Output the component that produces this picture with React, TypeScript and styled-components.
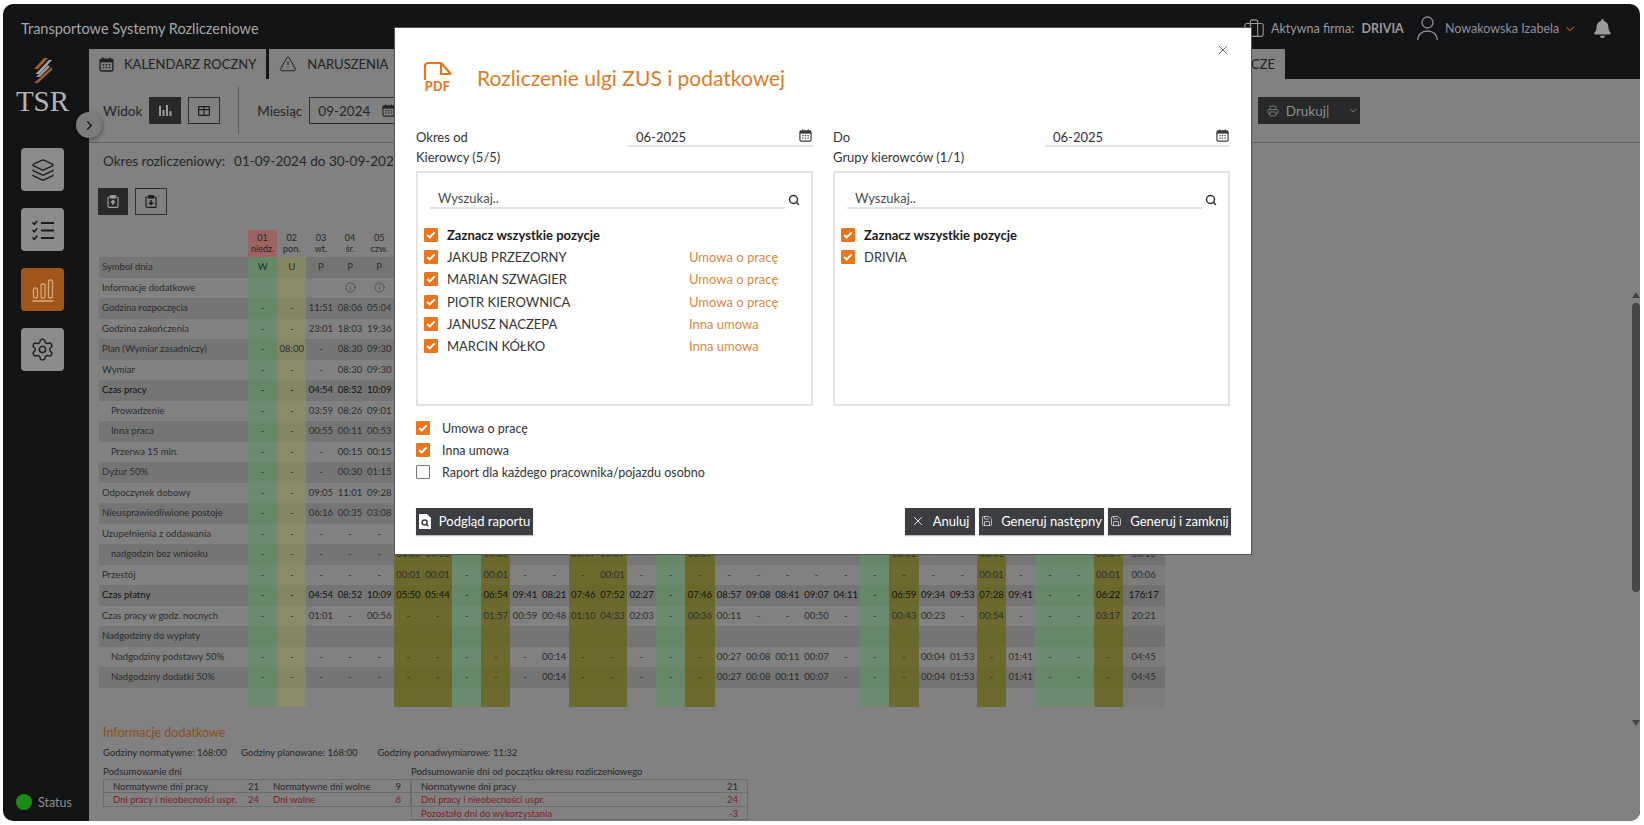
import styled, { createGlobalStyle } from 'styled-components';
import {
  Briefcase,
  ChevronDown,
  ChevronRight,
  ChartLine,
  Info,
  Layers,
  Printer,
  Save,
  Search,
  Settings,
  TriangleAlert,
  X,
} from 'lucide-react';
import { FaBell } from 'react-icons/fa';

const GlobalStyle = createGlobalStyle`
  html, body {
    margin: 0;
    padding: 0;
    background: #fff;
  }
  body {
    font-family: Lato, "Liberation Sans", sans-serif;
    overflow: hidden;
  }
  * {
    box-sizing: border-box;
  }
`;

type DayKind = 'g' | 'u' | 'n' | 'y';

const dayKinds = 'g u n n n y y g y n n y y n g y n n n n n g y n n y n g g y'.split(' ') as DayKind[];

const dayHeaders = [
  ['01', 'niedz.'],
  ['02', 'pon.'],
  ['03', 'wt.'],
  ['04', 'śr.'],
  ['05', 'czw.'],
];

const cellColors: Record<DayKind, string> = {
  g: 'rgba(92, 150, 96, 0.55)',
  u: 'rgba(150, 148, 84, 0.55)',
  n: 'transparent',
  y: 'rgba(105, 100, 24, 0.78)',
};

interface TableRow {
  label: string;
  values: string;
  indent?: boolean;
  strong?: boolean;
}

const tableRows: TableRow[] = [
  { label: 'Symbol dnia', values: 'W U P P P' },
  { label: 'Informacje dodatkowe', values: '_ _ _ i i' },
  { label: 'Godzina rozpoczęcia', values: '- - 11:51 08:06 05:04' },
  { label: 'Godzina zakończenia', values: '- - 23:01 18:03 19:36' },
  { label: 'Plan (Wymiar zasadniczy)', values: '- 08:00 - 08:30 09:30' },
  { label: 'Wymiar', values: '- - - 08:30 09:30' },
  { label: 'Czas pracy', values: '- - 04:54 08:52 10:09', strong: true },
  { label: 'Prowadzenie', values: '- - 03:59 08:26 09:01', indent: true },
  { label: 'Inna praca', values: '- - 00:55 00:11 00:53', indent: true },
  { label: 'Przerwa 15 min.', values: '- - - 00:15 00:15', indent: true },
  { label: 'Dyżur 50%', values: '- - - 00:30 01:15' },
  { label: 'Odpoczynek dobowy', values: '- - 09:05 11:01 09:28' },
  { label: 'Nieusprawiedliwione postoje', values: '- - 06:16 00:35 03:08' },
  { label: 'Uzupełnienia z oddawania', values: '- - - - -' },
  {
    label: 'nadgodzin bez wniosku',
    values: '- - - - - 00:03 00:03 - 00:03 - - 00:07 00:07 - - 00:07 - - - - - - 00:01 - - 00:01 - - - 00:04 00:10',
    indent: true,
  },
  {
    label: 'Przestój',
    values: '- - - - - 00:01 00:01 - 00:01 - - - 00:01 - - - - - - - - - - - - 00:01 - - - 00:01 00:06',
  },
  {
    label: 'Czas płatny',
    values:
      '- - 04:54 08:52 10:09 05:50 05:44 - 06:54 09:41 08:21 07:46 07:52 02:27 - 07:46 08:57 09:08 08:41 09:07 04:11 - 06:59 09:34 09:53 07:28 09:41 - - 06:22 176:17',
    strong: true,
  },
  {
    label: 'Czas pracy w godz. nocnych',
    values:
      '- - 01:01 - 00:56 - - - 01:57 00:59 00:48 01:10 04:33 02:03 - 00:36 00:11 - - 00:50 - - 00:43 00:23 - 00:54 - - - 03:17 20:21',
  },
  { label: 'Nadgodziny do wypłaty', values: '' },
  {
    label: 'Nadgodziny podstawy 50%',
    values: '- - - - - - - - - - 00:14 - - - - - 00:27 00:08 00:11 00:07 - - - 00:04 01:53 - 01:41 - - - 04:45',
    indent: true,
  },
  {
    label: 'Nadgodziny dodatki 50%',
    values: '- - - - - - - - - - 00:14 - - - - - 00:27 00:08 00:11 00:07 - - - 00:04 01:53 - 01:41 - - - 04:45',
    indent: true,
  },
];

const drivers = [
  ['JAKUB PRZEZORNY', 'Umowa o pracę'],
  ['MARIAN SZWAGIER', 'Umowa o pracę'],
  ['PIOTR KIEROWNICA', 'Umowa o pracę'],
  ['JANUSZ NACZEPA', 'Inna umowa'],
  ['MARCIN KÓŁKO', 'Inna umowa'],
];

const Window = styled.div`
  position: relative;
  width: 1637px;
  height: 817px;
  margin: 4px 0 0 3px;
  border-radius: 10px;
  overflow: hidden;
  background: #131416;
  display: flex;
  flex-direction: column;
`;

const Header = styled.header`
  height: 45px;
  flex: none;
  display: flex;
  align-items: center;
  padding: 4px 0 0 18px;
  color: #a6a7a7;
`;

const AppTitle = styled.div`
  font-size: 14.5px;
  flex: 1;
`;

const Company = styled.div`
  display: flex;
  align-items: center;
  gap: 6px;
  font-size: 12.5px;
  width: 174px;
  color: #9a9b9b;
  & b {
    margin-left: 4px;
  }
`;

const UserBox = styled.div`
  display: flex;
  align-items: center;
  font-size: 12.5px;
  width: 176px;
  color: #8f8f96;
  & > svg:first-child {
    margin-right: 7px;
  }
  & > svg:last-child {
    margin-left: 4px;
    color: #8a4c18;
  }
`;

const BellBox = styled.div`
  width: 47px;
  display: flex;
  color: #9a9b9b;
  font-size: 19px;
`;

const Body = styled.div`
  flex: 1;
  display: flex;
  min-height: 0;
`;

const Sidebar = styled.aside`
  width: 86px;
  flex: none;
  display: flex;
  flex-direction: column;
  align-items: center;
  padding-top: 9px;
  padding-right: 7px;
`;

const LogoText = styled.div`
  font-family: "Liberation Serif", serif;
  font-size: 29px;
  line-height: 26px;
  color: #b4b4b4;
  margin: 5px 0 34px;
`;

const NavButton = styled.div<{ $active?: boolean }>`
  width: 43px;
  height: 43px;
  margin-bottom: 17px;
  border-radius: 4px;
  display: flex;
  align-items: center;
  justify-content: center;
  background: ${(p) => (p.$active ? '#a3561a' : '#8a8b8a')};
  color: ${(p) => (p.$active ? '#d8a77c' : '#1c1d1e')};
`;

const Status = styled.div`
  margin-top: auto;
  align-self: flex-start;
  display: flex;
  align-items: center;
  gap: 6px;
  padding: 0 0 11px 13px;
  font-size: 12.5px;
  color: #8f9090;
`;

const StatusDot = styled.span`
  width: 16px;
  height: 16px;
  border-radius: 50%;
  background: #1d8a18;
`;

const Main = styled.main`
  flex: 1;
  min-width: 0;
  display: flex;
  flex-direction: column;
`;

const Tabs = styled.nav`
  height: 30px;
  flex: none;
  display: flex;
  gap: 3px;
  padding-right: 355px;
`;

const Tab = styled.div<{ $grow?: boolean; $width?: number }>`
  display: flex;
  align-items: center;
  justify-content: ${(p) => (p.$grow ? 'flex-end' : 'flex-start')};
  gap: 10px;
  padding: 0 10px;
  flex: ${(p) => (p.$grow ? 1 : 'none')};
  background: #808180;
  font-size: 13px;
  color: #1f2021;
  white-space: nowrap;
  & > svg {
    flex: none;
  }
`;

const Content = styled.div`
  position: relative;
  flex: 1;
  min-height: 0;
  background: #808180;
  color: #262728;
`;

const Toolbar = styled.div`
  height: 64px;
  display: flex;
  align-items: center;
  padding: 0 280px 0 14px;
  border-bottom: 1px solid #5f605f;
  font-size: 13.5px;
`;

const ToolLabel = styled.span`
  margin-right: 7px;
`;

const SquareButton = styled.div<{ $dark?: boolean; $size?: number }>`
  width: ${(p) => p.$size ?? 32}px;
  height: 27px;
  margin-right: 7px;
  display: flex;
  align-items: center;
  justify-content: center;
  background: ${(p) => (p.$dark ? '#27292b' : 'transparent')};
  border: 1px solid ${(p) => (p.$dark ? '#27292b' : '#2f3031')};
  color: ${(p) => (p.$dark ? '#9a9b9b' : '#1d1e1f')};
`;

const ToolDivider = styled.span`
  width: 1px;
  height: 47px;
  background: #5a5b5a;
  margin: 0 18px 0 11px;
`;

const MonthInput = styled.div`
  width: 94px;
  height: 27px;
  border: 1px solid #2f3031;
  display: flex;
  align-items: center;
  justify-content: space-between;
  padding: 0 7px 0 8px;
`;

const PrintButton = styled.div`
  margin-left: auto;
  width: 102px;
  height: 27px;
  background: #27292b;
  color: #8f9090;
  display: flex;
  align-items: center;
  gap: 7px;
  padding: 0 0 0 9px;
  & > svg:last-child {
    margin-left: 11px;
  }
`;

const PeriodLine = styled.div`
  height: 36px;
  display: flex;
  align-items: center;
  padding-left: 14px;
  font-size: 13.5px;
  white-space: nowrap;
  & span + span {
    margin-left: 9px;
  }
`;

const ActionRow = styled.div`
  display: flex;
  padding: 9px 0 0 9px;
  margin-bottom: 15px;
`;

const Table = styled.div`
  margin-left: 10px;
  width: 1066px;
  font-size: 9.5px;
`;

const gridColumns = '149px repeat(30, 29.17px) 42px';

const HeadRow = styled.div`
  display: grid;
  grid-template-columns: ${gridColumns};
  height: 27px;
`;

const HeadCell = styled.div<{ $holiday?: boolean }>`
  text-align: center;
  line-height: 10.5px;
  padding-top: 3px;
  font-size: 9px;
  background: ${(p) => (p.$holiday ? '#9e6464' : 'transparent')};
`;

const Row = styled.div<{ $odd?: boolean; $strong?: boolean }>`
  display: grid;
  grid-template-columns: ${gridColumns};
  height: 20.5px;
  line-height: 20.5px;
  background: ${(p) => (p.$odd ? '#747574' : 'transparent')};
  color: ${(p) => (p.$strong ? '#111' : '#2c2d2e')};
`;

const RowLabel = styled.div<{ $indent?: boolean }>`
  padding-left: ${(p) => (p.$indent ? 12 : 3)}px;
  white-space: nowrap;
`;

const Cell = styled.div<{ $kind: DayKind }>`
  text-align: center;
  background: ${(p) => cellColors[p.$kind]};
  display: flex;
  align-items: center;
  justify-content: center;
`;

const TotalCell = styled.div`
  text-align: center;
  background: rgba(0, 0, 0, 0.03);
`;

const TailRow = styled(Row)`
  height: 19px;
`;

const InfoSection = styled.section`
  padding: 18px 0 0 14px;
  font-size: 9.5px;
`;

const InfoTitle = styled.h3`
  margin: 0 0 7px;
  font-size: 12.5px;
  font-weight: 400;
  color: #8a4f1c;
`;

const InfoHours = styled.div`
  display: flex;
  gap: 14px;
  margin-bottom: 7px;
  height: 12px;
  line-height: 12px;
  & span + span + span {
    margin-left: 6px;
  }
`;

const SummaryGrid = styled.div`
  display: grid;
  grid-template-columns: 308px 337px;
`;

const SummaryTitle = styled.div`
  height: 13px;
  line-height: 12px;
`;

const SummaryTable = styled.div`
  border: 1px solid #6a6b6a;
  border-bottom: 0;
`;

const SummaryRow = styled.div<{ $cols: string; $red?: boolean }>`
  display: grid;
  grid-template-columns: ${(p) => p.$cols};
  height: 13.5px;
  line-height: 13px;
  padding: 0 9px;
  border-bottom: 1px solid #6a6b6a;
  color: ${(p) => (p.$red ? '#7c1f2a' : '#292a2b')};
  & > span:nth-child(even) {
    text-align: right;
  }
`;

const ScrollTrack = styled.div`
  position: absolute;
  right: 0;
  top: 213px;
  width: 8px;
  height: 434px;
  display: flex;
  flex-direction: column;
  align-items: center;
  justify-content: space-between;
  color: #454647;
`;

const ScrollThumb = styled.div`
  width: 8px;
  height: 289px;
  margin-top: 5px;
  margin-bottom: auto;
  background: #454647;
  border-radius: 4px;
`;

const Arrow = styled.span<{ $down?: boolean }>`
  width: 0;
  height: 0;
  border-left: 4px solid transparent;
  border-right: 4px solid transparent;
  ${(p) => (p.$down ? 'border-top: 6px solid #454647;' : 'border-bottom: 6px solid #454647;')}
`;

const Collapse = styled.div`
  position: absolute;
  left: 73px;
  top: 108px;
  width: 26px;
  height: 26px;
  border-radius: 50%;
  background: #7b7c7b;
  box-shadow: 1px 2px 4px rgba(0, 0, 0, 0.3);
  display: flex;
  align-items: center;
  justify-content: center;
  color: #141516;
`;

const Modal = styled.div`
  position: absolute;
  left: 392px;
  top: 24px;
  width: 856px;
  height: 526px;
  background: #fff;
  box-shadow: 0 0 0 1px #555;
  padding: 34px 20px 0 21px;
  color: #333436;
  font-size: 13px;
`;

const CloseButton = styled.div`
  position: absolute;
  right: 20px;
  top: 14px;
  display: flex;
  color: #666;
`;

const ModalHead = styled.div`
  display: flex;
  align-items: center;
  height: 31px;
  padding-left: 7px;
  gap: 25px;
  margin-bottom: 35px;
`;

const PdfMark = styled.div`
  position: relative;
  width: 29px;
  height: 31px;
  color: #e9761f;
  & svg {
    display: block;
  }
`;

const PdfLabel = styled.span`
  position: absolute;
  left: 0;
  bottom: 0;
  width: 100%;
  text-align: center;
  font-size: 12.5px;
  line-height: 12px;
  font-weight: 900;
  letter-spacing: 0.4px;
`;

const ModalTitle = styled.h2`
  margin: 0;
  font-size: 21px;
  font-weight: 400;
  color: #dd7d2a;
  white-space: nowrap;
`;

const Columns = styled.div`
  display: grid;
  grid-template-columns: 397px 397px;
  gap: 20px;
`;

const PeriodRow = styled.div`
  display: flex;
  justify-content: space-between;
  height: 19px;
  line-height: 18px;
`;

const DateField = styled.div`
  width: 185px;
  border-bottom: 2px solid #e3e3e3;
  display: flex;
  justify-content: space-between;
  padding: 0 1px 0 8px;
  & > svg {
    margin-top: 1px;
    color: #3a3b3d;
  }
`;

const ListLabel = styled.div`
  height: 24px;
  line-height: 21px;
`;

const ListBox = styled.div`
  height: 235px;
  border: 2px solid #e4e4e4;
  padding: 17px 0 0 6px;
`;

const SearchRow = styled.div`
  display: flex;
  align-items: center;
  margin: 0 0 15px 6px;
  height: 19px;
  & > svg {
    margin-left: 3px;
    color: #333;
  }
`;

const SearchInput = styled.div`
  width: 355px;
  height: 19px;
  line-height: 17px;
  padding-left: 8px;
  color: #4a4b4d;
  border-bottom: 2px solid #e3e3e3;
`;

const ListRow = styled.div<{ $bold?: boolean }>`
  display: grid;
  grid-template-columns: 23px 242px 1fr;
  align-items: center;
  height: 22.2px;
  font-weight: ${(p) => (p.$bold ? 700 : 400)};
  color: ${(p) => (p.$bold ? '#1a1a1a' : '#333436')};
`;

const Contract = styled.span`
  color: #d98a3e;
`;

const CheckMark = styled.span<{ $checked?: boolean }>`
  width: 14px;
  height: 14px;
  display: flex;
  align-items: center;
  justify-content: center;
  background: ${(p) => (p.$checked ? '#e9761f' : '#fff')};
  border: 1px solid ${(p) => (p.$checked ? '#e9761f' : '#777')};
  border-radius: 1px;
`;

const Options = styled.div`
  margin-top: 11px;
  font-size: 12.5px;
`;

const OptionRow = styled.div`
  display: flex;
  align-items: center;
  gap: 12px;
  height: 22.2px;
`;

const Footer = styled.div`
  display: flex;
  align-items: center;
  margin-top: 24px;
  gap: 4px;
`;

const FooterButton = styled.div<{ $first?: boolean; $width: number }>`
  width: ${(p) => p.$width}px;
  height: 27px;
  background: #3c3e42;
  color: #fff;
  display: flex;
  align-items: center;
  justify-content: center;
  gap: 8px;
  font-size: 13px;
  white-space: nowrap;
  margin-right: ${(p) => (p.$first ? 'auto' : 0)};
  box-shadow: 0 1px 1px rgba(0, 0, 0, 0.25);
`;

function CalendarIcon({ size = 14 }: { size?: number }) {
  return (
    <svg width={size} height={size} viewBox="0 0 14 14" fill="none">
      <rect x="1" y="2" width="12" height="11" rx="1.5" stroke="currentColor" strokeWidth="1.3" />
      <rect x="1" y="2" width="12" height="3" fill="currentColor" />
      <path d="M4 0.5v2M10 0.5v2" stroke="currentColor" strokeWidth="1.3" />
      <path
        d="M3.5 7.2h1.4M6.3 7.2h1.4M9.1 7.2h1.4M3.5 9.8h1.4M6.3 9.8h1.4M9.1 9.8h1.4"
        stroke="currentColor"
        strokeWidth="1.3"
      />
    </svg>
  );
}

function LogoMark() {
  return (
    <svg width="20" height="25" viewBox="0 0 20 25">
      <path d="M11 0h4L5 11H1z" fill="#a3602a" />
      <path d="M16 2h3L6 16H2.5z" fill="#a7a7a7" />
      <path d="M19 9v3L5 25H1z" fill="#a3602a" />
      <path d="M15 7l2 2L7 19H3z" fill="#c9c9c9" opacity="0.7" />
    </svg>
  );
}

function ChecklistIcon() {
  return (
    <svg width="24" height="24" viewBox="0 0 24 24" fill="none" stroke="currentColor" strokeWidth="1.6">
      <path d="M1.5 4.5l1.8 1.8 3-3.5M1.5 12l1.8 1.8 3-3.5M1.5 19.5l1.8 1.8 3-3.5" />
      <path d="M10 5h13M10 12.5h13M10 20h13" strokeWidth="1.8" />
    </svg>
  );
}

function BarsIcon() {
  return (
    <svg width="22" height="24" viewBox="0 0 22 24" fill="none" stroke="currentColor" strokeWidth="1.3">
      <rect x="1.5" y="10" width="4" height="10" rx="1.6" />
      <rect x="9" y="6" width="4" height="14" rx="1.6" />
      <rect x="16.5" y="2" width="4" height="18" rx="1.6" />
      <path d="M0.5 23h21" strokeWidth="1.6" />
    </svg>
  );
}

function SmallBars() {
  return (
    <svg width="13" height="11" viewBox="0 0 13 11" fill="currentColor">
      <rect x="0" y="1" width="2" height="10" />
      <rect x="3.5" y="5" width="2" height="6" />
      <rect x="7" y="0" width="2" height="11" />
      <rect x="10.5" y="6" width="2" height="5" />
    </svg>
  );
}

function GridIcon() {
  return (
    <svg width="12" height="10" viewBox="0 0 12 10" fill="none" stroke="currentColor" strokeWidth="1.2">
      <rect x="0.6" y="0.6" width="10.8" height="8.8" />
      <path d="M0.6 3.6h10.8M6 0.6v8.8" />
    </svg>
  );
}

function ClipboardIcon({ up }: { up?: boolean }) {
  return (
    <svg width="12" height="13" viewBox="0 0 12 13" fill="none" stroke="currentColor" strokeWidth="1.2">
      <rect x="1" y="2" width="10" height="10.4" rx="1" />
      <rect x="3.8" y="0.6" width="4.4" height="2.4" fill="currentColor" />
      <path d={up ? 'M6 10V5.5M4 7.5l2-2 2 2' : 'M6 5v4.5M4 7.5l2 2 2-2'} strokeWidth="1.5" />
    </svg>
  );
}

function PersonIcon() {
  return (
    <svg width="21" height="25" viewBox="0 0 21 25" fill="none" stroke="currentColor" strokeWidth="1.3">
      <circle cx="10.5" cy="6.5" r="5.5" />
      <path d="M0.8 24c0-5.5 4-9 9.7-9s9.7 3.500 9.700 9" />
    </svg>
  );
}

function PreviewIcon() {
  return (
    <svg width="12" height="15" viewBox="0 0 12 15">
      <path d="M0 0h8l4 4v11H0z" fill="#fff" />
      <circle cx="5.600" cy="8.500" r="2.500" fill="none" stroke="#3c3e42" strokeWidth="1.4" />
      <path d="M7.400 10.300l2 2" stroke="#3c3e42" strokeWidth="1.400" />
    </svg>
  );
}

function TickBox({ checked = true }: { checked?: boolean }) {
  return (
    <CheckMark $checked={checked}>
      {checked && (
        <svg width="10" height="8" viewBox="0 0 10 8" fill="none" stroke="#fff" strokeWidth="2">
          <path d="M1.200 4l2.500 2.400 5-5" />
        </svg>
      )}
    </CheckMark>
  );
}

function DataRow({ row, odd }: { row: TableRow; odd: boolean }) {
  const parts = row.values ? row.values.split(' ') : [];
  return (
    <Row $odd={odd} $strong={row.strong}>
      <RowLabel $indent={row.indent}>{row.label}</RowLabel>
      {dayKinds.map((kind, i) => {
        const value = parts[i];
        return (
          <Cell key={i} $kind={kind}>
            {value === 'i' ? <Info size={11} strokeWidth={1.2} /> : value === '_' ? '' : value}
          </Cell>
        );
      })}
      <TotalCell>{parts[30]}</TotalCell>
    </Row>
  );
}

function SelectList({ items }: { items: string[][] }) {
  return (
    <ListBox>
      <SearchRow>
        <SearchInput>Wyszukaj..</SearchInput>
        <Search size={12} strokeWidth={3} />
      </SearchRow>
      <ListRow $bold>
        <TickBox />
        <span>Zaznacz wszystkie pozycje</span>
      </ListRow>
      {items.map(([name, contract]) => (
        <ListRow key={name}>
          <TickBox />
          <span>{name}</span>
          {contract && <Contract>{contract}</Contract>}
        </ListRow>
      ))}
    </ListBox>
  );
}

export default function App() {
  return (
    <>
      <GlobalStyle />
      <Window>
        <Header>
          <AppTitle>Transportowe Systemy Rozliczeniowe</AppTitle>
          <Company>
            <Briefcase size={22} strokeWidth={1.2} />
            <span>
              Aktywna firma: <b>DRIVIA</b>
            </span>
          </Company>
          <UserBox>
            <PersonIcon />
            <span>Nowakowska Izabela</span>
            <ChevronDown size={14} />
          </UserBox>
          <BellBox>
            <FaBell />
          </BellBox>
        </Header>
        <Body>
          <Sidebar>
            <LogoMark />
            <LogoText>TSR</LogoText>
            <NavButton>
              <Layers size={24} strokeWidth={1.3} />
            </NavButton>
            <NavButton>
              <ChecklistIcon />
            </NavButton>
            <NavButton $active>
              <BarsIcon />
            </NavButton>
            <NavButton>
              <Settings size={25} strokeWidth={1.3} />
            </NavButton>
            <Status>
              <StatusDot />
              Status
            </Status>
          </Sidebar>
          <Main>
            <Tabs>
              <Tab>
                <CalendarIcon size={15} />
                KALENDARZ ROCZNY
              </Tab>
              <Tab>
                <TriangleAlert size={18} strokeWidth={1.3} />
                NARUSZENIA
              </Tab>
              <Tab>
                <ChartLine size={16} strokeWidth={1.3} />
                ROZLICZENIA
              </Tab>
              <Tab $grow>RAPORTY KIEROWCZE</Tab>
            </Tabs>
            <Content>
              <Toolbar>
                <ToolLabel>Widok</ToolLabel>
                <SquareButton $dark>
                  <SmallBars />
                </SquareButton>
                <SquareButton>
                  <GridIcon />
                </SquareButton>
                <ToolDivider />
                <ToolLabel>Miesiąc</ToolLabel>
                <MonthInput>
                  09-2024
                  <CalendarIcon size={13} />
                </MonthInput>
                <PrintButton>
                  <Printer size={14} strokeWidth={1.5} />
                  Drukuj|
                  <ChevronDown size={15} strokeWidth={1.5} />
                </PrintButton>
              </Toolbar>
              <PeriodLine>
                <span>Okres rozliczeniowy:</span>
                <span>01-09-2024 do 30-09-2024</span>
                <span>Typ zatrudnienia:</span>
              </PeriodLine>
              <ActionRow>
                <SquareButton $dark $size={30}>
                  <ClipboardIcon up />
                </SquareButton>
                <SquareButton $size={32}>
                  <ClipboardIcon />
                </SquareButton>
              </ActionRow>
              <Table>
                <HeadRow>
                  <span />
                  {dayHeaders.map(([day, name], i) => (
                    <HeadCell key={day} $holiday={i === 0}>
                      {day}
                      <br />
                      {name}
                    </HeadCell>
                  ))}
                </HeadRow>
                {tableRows.map((row, i) => (
                  <DataRow key={row.label} row={row} odd={i % 2 === 0} />
                ))}
                <TailRow>
                  <span />
                  {dayKinds.map((kind, i) => (
                    <Cell key={i} $kind={kind} />
                  ))}
                  <TotalCell />
                </TailRow>
              </Table>
              <InfoSection>
                <InfoTitle>Informacje dodatkowe</InfoTitle>
                <InfoHours>
                  <span>Godziny normatywne: 168:00</span>
                  <span>Godziny planowane: 168:00</span>
                  <span>Godziny ponadwymiarowe: 11:32</span>
                </InfoHours>
                <SummaryGrid>
                  <div>
                    <SummaryTitle>Podsumowanie dni</SummaryTitle>
                    <SummaryTable>
                      <SummaryRow $cols="130px 16px 131px 1fr">
                        <span>Normatywne dni pracy</span>
                        <span>21</span>
                        <span style={{ paddingLeft: 14 }}>Normatywne dni wolne</span>
                        <span>9</span>
                      </SummaryRow>
                      <SummaryRow $cols="130px 16px 131px 1fr" $red>
                        <span>Dni pracy i nieobecności uspr.</span>
                        <span>24</span>
                        <span style={{ paddingLeft: 14 }}>Dni wolne</span>
                        <span>6</span>
                      </SummaryRow>
                    </SummaryTable>
                  </div>
                  <div>
                    <SummaryTitle>Podsumowanie dni od początku okresu rozliczeniowego</SummaryTitle>
                    <SummaryTable>
                      <SummaryRow $cols="1fr 30px">
                        <span>Normatywne dni pracy</span>
                        <span>21</span>
                      </SummaryRow>
                      <SummaryRow $cols="1fr 30px" $red>
                        <span>Dni pracy i nieobecności uspr.</span>
                        <span>24</span>
                      </SummaryRow>
                      <SummaryRow $cols="1fr 30px" $red>
                        <span>Pozostało dni do wykorzystania</span>
                        <span>-3</span>
                      </SummaryRow>
                    </SummaryTable>
                  </div>
                </SummaryGrid>
              </InfoSection>
              <ScrollTrack>
                <Arrow />
                <ScrollThumb />
                <Arrow $down />
              </ScrollTrack>
            </Content>
          </Main>
        </Body>
        <Collapse>
          <ChevronRight size={15} />
        </Collapse>
        <Modal>
          <CloseButton>
            <X size={16} strokeWidth={1.4} />
          </CloseButton>
          <ModalHead>
            <PdfMark>
              <svg width="29" height="19" viewBox="0 0 29 19" fill="none" stroke="currentColor" strokeWidth="2.200">
                <path d="M2 18V4a3 3 0 0 1 3-3h13l9 10v1H18V2" />
              </svg>
              <PdfLabel>PDF</PdfLabel>
            </PdfMark>
            <ModalTitle>Rozliczenie ulgi ZUS i podatkowej</ModalTitle>
          </ModalHead>
          <Columns>
            <div>
              <PeriodRow>
                <span>Okres od</span>
                <DateField>
                  06-2025
                  <CalendarIcon size={13} />
                </DateField>
              </PeriodRow>
              <ListLabel>Kierowcy (5/5)</ListLabel>
              <SelectList items={drivers} />
            </div>
            <div>
              <PeriodRow>
                <span>Do</span>
                <DateField>
                  06-2025
                  <CalendarIcon size={13} />
                </DateField>
              </PeriodRow>
              <ListLabel>Grupy kierowców (1/1)</ListLabel>
              <SelectList items={[['DRIVIA', '']]} />
            </div>
          </Columns>
          <Options>
            <OptionRow>
              <TickBox />
              Umowa o pracę
            </OptionRow>
            <OptionRow>
              <TickBox />
              Inna umowa
            </OptionRow>
            <OptionRow>
              <TickBox checked={false} />
              Raport dla każdego pracownika/pojazdu osobno
            </OptionRow>
          </Options>
          <Footer>
            <FooterButton $first $width={117}>
              <PreviewIcon />
              Podgląd raportu
            </FooterButton>
            <FooterButton $width={70}>
              <X size={14} strokeWidth={1.5} />
              Anuluj
            </FooterButton>
            <FooterButton $width={125}>
              <Save size={12} strokeWidth={1.3} />
              Generuj następny
            </FooterButton>
            <FooterButton $width={123}>
              <Save size={12} strokeWidth={1.3} />
              Generuj i zamknij
            </FooterButton>
          </Footer>
        </Modal>
      </Window>
    </>
  );
}
